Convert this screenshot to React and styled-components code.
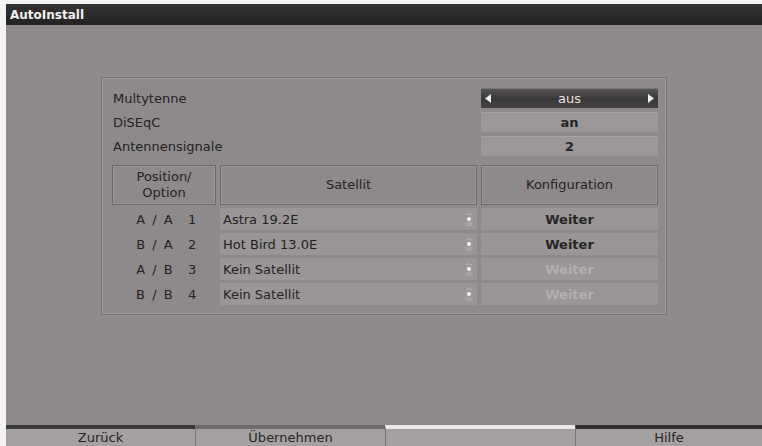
import React from "react";
import styled, { createGlobalStyle } from "styled-components";

const Global = createGlobalStyle`
  html, body {
    margin: 0;
    padding: 0;
    background: #ffffff;
  }
  body {
    font-family: "DejaVu Sans", "Liberation Sans", sans-serif;
  }
`;

const Screen = styled.div`
  width: 762px;
  height: 446px;
  box-sizing: border-box;
  padding: 4px 0 0 6px;
  display: flex;
  flex-direction: column;
  background: #f4f3f3;
  overflow: hidden;
`;

const TitleBar = styled.div`
  height: 21px;
  flex: none;
  display: flex;
  align-items: center;
  padding-left: 4px;
  background: linear-gradient(#353233, #232121);
  color: #f2f2f2;
  font-weight: bold;
  font-size: 12px;
`;

const Main = styled.div`
  flex: 1;
  background: #8e8a8b;
  padding: 52px 0 0 95px;
`;

const Panel = styled.div`
  width: 566px;
  height: 238px;
  box-sizing: border-box;
  border: 1px solid #767273;
  box-shadow: inset 0 0 0 1px #9c9899;
  padding: 10px 8px 0 10px;
  display: flex;
  flex-direction: column;
`;

const Row = styled.div`
  display: grid;
  grid-template-columns: 104px 257px 177px;
  column-gap: 4px;
  height: ${(p) => p.$h}px;
  margin-top: ${(p) => p.$mt || 0}px;
  color: #242223;
  font-size: 13px;
`;

const Label = styled.div`
  grid-column: 1 / 3;
  display: flex;
  align-items: center;
  padding-left: 1px;
`;

const Value = styled.div`
  display: flex;
  align-items: center;
  justify-content: space-between;
  padding: 0 4px;
  font-weight: bold;
  background: ${(p) => (p.$active ? "linear-gradient(#5a5758, #3b3839 55%, #454243)" : "#9c9899")};
  color: ${(p) => (p.$active ? "#e6e4e4" : "#262425")};
  box-shadow: ${(p) => (p.$active ? "inset 0 1px 0 #7d797a" : "inset 0 1px 0 #a6a2a3")};
`;

const ValueText = styled.span`
  flex: 1;
  text-align: center;
  font-weight: ${(p) => (p.$active ? "normal" : "bold")};
`;

const Head = styled.div`
  display: flex;
  align-items: center;
  justify-content: center;
  text-align: center;
  line-height: 16px;
  border: 1px solid #6c6869;
  box-shadow: inset 0 0 0 1px #9a9697;
`;

const Pos = styled.div`
  display: flex;
  align-items: center;
  justify-content: center;
  gap: 14px;
  padding-left: 6px;
  letter-spacing: 1.5px;
`;

const Sat = styled.div`
  display: flex;
  align-items: center;
  justify-content: space-between;
  padding: 0 3px 0 3px;
  background: #9a9697;
`;

const Conf = styled.div`
  display: flex;
  align-items: center;
  justify-content: center;
  background: #9a9697;
  font-weight: bold;
  color: ${(p) => (p.$disabled ? "#b4b0b1" : "#262425")};
`;

const Footer = styled.div`
  height: 21px;
  flex: none;
  display: grid;
  grid-template-columns: 189px 190px 190px 1fr;
  background: #a4a0a1;
`;

const FooterButton = styled.div`
  display: flex;
  align-items: center;
  justify-content: center;
  border-top: 4px solid ${(p) => p.$line};
  border-left: ${(p) => (p.$first ? "none" : "1px solid #7a7677")};
  color: #262425;
  font-size: 13px;
  line-height: 17px;
`;

function Arrow({ dir }) {
  return (
    <svg width="6" height="9" viewBox="0 0 6 9">
      {dir === "left" ? (
        <polygon points="6,0 0,4.5 6,9" fill="#f0f0f0" />
      ) : (
        <polygon points="0,0 6,4.5 0,9" fill="#f0f0f0" />
      )}
    </svg>
  );
}

function DishIcon() {
  return (
    <svg width="10" height="14" viewBox="0 0 10 14">
      <path d="M2 3 Q5 0 8 3" stroke="#b8b4b5" strokeWidth="1" fill="none" />
      <circle cx="5" cy="7" r="2" fill="#f4f2f2" />
      <path d="M1 11 H9 M2 13 H8" stroke="#b3afb0" strokeWidth="1" />
    </svg>
  );
}

const rows = [
  { a: "A / A", n: "1", sat: "Astra 19.2E", on: true },
  { a: "B / A", n: "2", sat: "Hot Bird 13.0E", on: true },
  { a: "A / B", n: "3", sat: "Kein Satellit", on: false },
  { a: "B / B", n: "4", sat: "Kein Satellit", on: false },
];

export default function App() {
  return (
    <Screen>
      <Global />
      <TitleBar>AutoInstall</TitleBar>
      <Main>
        <Panel>
          <Row $h={20}>
            <Label>Multytenne</Label>
            <Value $active>
              <Arrow dir="left" />
              <ValueText $active>aus</ValueText>
              <Arrow dir="right" />
            </Value>
          </Row>
          <Row $h={20} $mt={4}>
            <Label>DiSEqC</Label>
            <Value>
              <ValueText>an</ValueText>
            </Value>
          </Row>
          <Row $h={20} $mt={4}>
            <Label>Antennensignale</Label>
            <Value>
              <ValueText>2</ValueText>
            </Value>
          </Row>
          <Row $h={40} $mt={9}>
            <Head>
              Position/
              <br />
              Option
            </Head>
            <Head>Satellit</Head>
            <Head>Konfiguration</Head>
          </Row>
          {rows.map((r, i) => (
            <Row key={i} $h={22} $mt={3}>
              <Pos>
                <span>{r.a}</span>
                <span>{r.n}</span>
              </Pos>
              <Sat>
                <span>{r.sat}</span>
                <DishIcon />
              </Sat>
              <Conf $disabled={!r.on}>Weiter</Conf>
            </Row>
          ))}
        </Panel>
      </Main>
      <Footer>
        <FooterButton $first $line="#3a3738">Zurück</FooterButton>
        <FooterButton $line="#6f6b6c">Übernehmen</FooterButton>
        <FooterButton $line="#ebe9e9"></FooterButton>
        <FooterButton $line="#323031">Hilfe</FooterButton>
      </Footer>
    </Screen>
  );
}
